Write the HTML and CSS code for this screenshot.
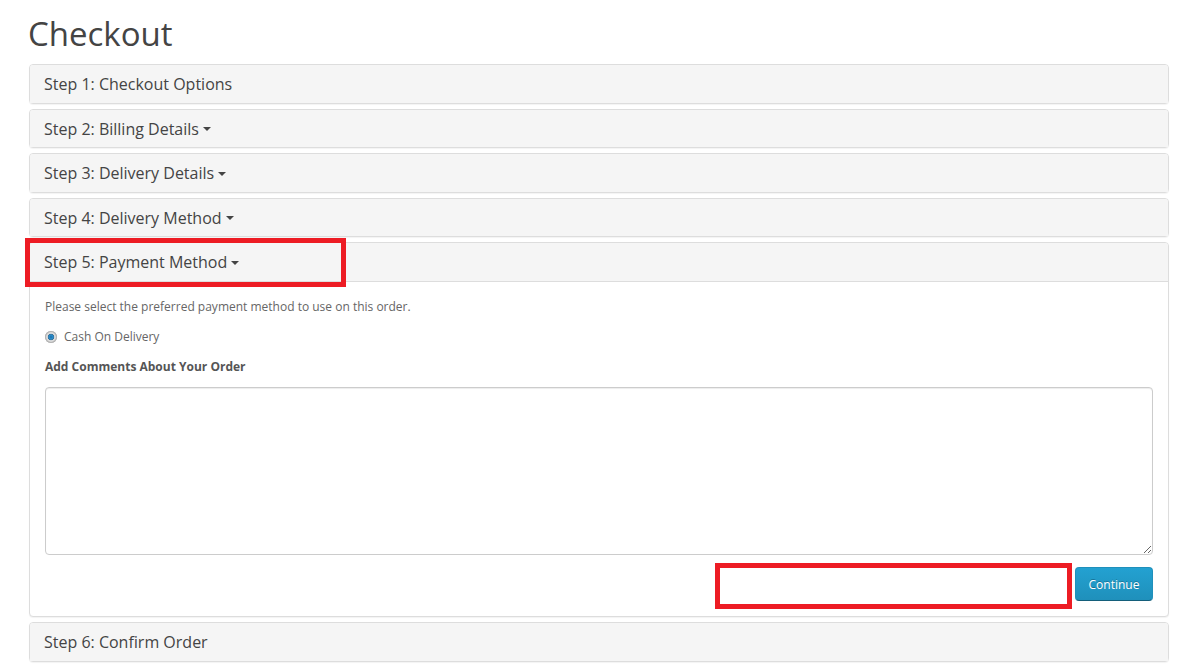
FILE: index.html
```html
<!DOCTYPE html>
<html>
<head>
<meta charset="utf-8">
<title>Checkout</title>
<link rel="stylesheet" href="styles.css">
</head>
<body>
<div class="container">
  <h1 class="page-title">Checkout</h1>
  <div class="panel-group">
    <div class="panel">
      <div class="panel-heading"><h4 class="panel-title">Step 1: Checkout Options</h4></div>
    </div>
    <div class="panel">
      <div class="panel-heading"><h4 class="panel-title">Step 2: Billing Details <span class="caret"></span></h4></div>
    </div>
    <div class="panel">
      <div class="panel-heading"><h4 class="panel-title">Step 3: Delivery Details <span class="caret"></span></h4></div>
    </div>
    <div class="panel">
      <div class="panel-heading"><h4 class="panel-title">Step 4: Delivery Method <span class="caret"></span></h4></div>
    </div>
    <div class="panel panel-open">
      <div class="panel-heading"><h4 class="panel-title">Step 5: Payment Method <span class="caret"></span></h4></div>
      <div class="panel-body">
        <p class="intro">Please select the preferred payment method to use on this order.</p>
        <div class="radio">
          <label><span class="radio-dot"></span>Cash On Delivery</label>
        </div>
        <p class="comment-label"><strong>Add Comments About Your Order</strong></p>
        <textarea class="form-control" rows="8"></textarea>
        <div class="buttons">
          <button class="btn-primary" type="button">Continue</button>
        </div>
      </div>
    </div>
    <div class="panel">
      <div class="panel-heading"><h4 class="panel-title">Step 6: Confirm Order</h4></div>
    </div>
  </div>
</div>
<div class="mark mark-step"></div>
<div class="mark mark-button"></div>
</body>
</html>
```
FILE: styles.css
```css
* { box-sizing: border-box; }
html, body { margin: 0; padding: 0; background: #fff; }
body {
  font-family: "Open Sans", "Liberation Sans", sans-serif;
  font-size: 12px;
  line-height: 20px;
  color: #666;
  width: 1190px;
  height: 667px;
  overflow: hidden;
  position: relative;
}
.container { padding: 0 21px 0 29px; }
.page-title {
  font-family: "Open Sans", sans-serif;
  font-weight: 400;
  font-size: 33px;
  line-height: 1.1;
  color: #444;
  margin: 16px 0 11.7px -1px;
}
.panel-group { display: flex; flex-direction: column; gap: 5px; }
.panel {
  background: #fff;
  border: 1px solid #ddd;
  border-radius: 4px;
  box-shadow: 0 1px 1px rgba(0,0,0,0.05);
}
.panel-heading {
  background: #f5f5f5;
  padding: 11px 14px 9px;
  border-radius: 3px 3px 0 0;
}
.panel-open .panel-heading { border-bottom: 1px solid #ddd; }
.panel-title {
  margin: 0;
  font-size: 16px;
  font-weight: 400;
  line-height: 17.6px;
  color: #444;
}
.caret {
  display: inline-block;
  width: 0; height: 0;
  border-left: 4px solid transparent;
  border-right: 4px solid transparent;
  border-top: 4px solid #444;
  vertical-align: middle;
  margin-left: 0;
  margin-top: -2px;
}
.panel-body { padding: 15px 15px 15px 15px; }
.intro { margin: 0 0 10px; }
.radio { margin: 0 0 10px; }
.radio label { display: flex; align-items: center; gap: 7px; padding-left: 0; }
.radio-dot {
  width: 12px; height: 12px;
  border-radius: 50%;
  background: radial-gradient(circle, #1b6ea6 0, #2a8fd0 2px, #3b6f93 3px, #e0e0e0 3.6px, #d4d4d4 5px, #9a9a9a 6px);
  box-shadow: inset 0 0 0 1px #b5b5b5;
}
.comment-label { margin: 0 0 10px; }
.comment-label strong { color: #555; font-weight: 700; }
.form-control {
  display: block;
  width: 100%;
  height: 168px;
  border: 1px solid #ccc;
  border-radius: 4px;
  box-shadow: inset 0 1px 1px rgba(0,0,0,0.075);
  font-family: inherit;
  font-size: 12px;
  padding: 6px 12px;
  resize: vertical;
}
.buttons { display: flex; justify-content: flex-end; margin-top: 12px; }
.btn-primary {
  font-family: "Open Sans", sans-serif;
  font-size: 12px;
  line-height: 18px;
  color: #fff;
  text-shadow: 0 -1px 0 rgba(0,0,0,0.25);
  background: linear-gradient(to bottom, #23a1d1, #1f90bb);
  border: 1px solid;
  border-color: #1f90bb #1f90bb #145e7a;
  border-radius: 4px;
  padding: 8px 12px 6px;
  height: 34px;
  width: 78px;
  cursor: pointer;
}
.mark {
  position: absolute;
  border: 5px solid #ed1c24;
  pointer-events: none;
}
.mark-step { left: 25px; top: 238px; width: 321px; height: 49px; }
.mark-button { left: 715px; top: 563px; width: 357px; height: 46px; }
```
